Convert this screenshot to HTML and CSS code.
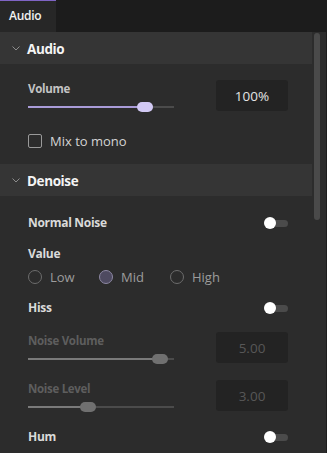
FILE: index.html
```html
<!DOCTYPE html>
<html lang="en">

<head>
    <meta charset="UTF-8">
    <meta name="viewport" content="width=device-width, initial-scale=1.0">
    <title>Audio</title>
    <link rel="stylesheet" href="styles.css">
</head>

<body>
    <div class="tabs">
        <div class="tab">Audio</div>
    </div>

    <div class="main">
        <div class="panel">
            <div class="section-head">
                <svg class="chevron" width="8" height="5" viewBox="0 0 8 5"><polyline points="0.5,0.5 4,4 7.5,0.5" /></svg>
                <span>Audio</span>
            </div>
            <div class="section-body audio-body">
                <div class="slider-row">
                    <div class="slider-col">
                        <div class="label">Volume</div>
                        <div class="slider">
                            <div class="fill" style="width: 79%"></div>
                            <div class="thumb" style="left: 109px"></div>
                        </div>
                    </div>
                    <div class="value-box">100%</div>
                </div>
                <div class="check-row">
                    <span class="checkbox"></span>
                    <span>Mix to mono</span>
                </div>
            </div>

            <div class="section-head">
                <svg class="chevron" width="8" height="5" viewBox="0 0 8 5"><polyline points="0.5,0.5 4,4 7.5,0.5" /></svg>
                <span>Denoise</span>
            </div>
            <div class="section-body denoise-body">
                <div class="toggle-row first">
                    <span class="label strong">Normal Noise</span>
                    <span class="toggle"></span>
                </div>
                <div class="label strong value-label">Value</div>
                <div class="radios">
                    <label class="radio"><span class="dot"></span>Low</label>
                    <label class="radio"><span class="dot checked"></span>Mid</label>
                    <label class="radio"><span class="dot"></span>High</label>
                </div>
                <div class="toggle-row hiss">
                    <span class="label strong">Hiss</span>
                    <span class="toggle"></span>
                </div>
                <div class="slider-row disabled noise-volume">
                    <div class="slider-col">
                        <div class="label">Noise Volume</div>
                        <div class="slider">
                            <div class="fill" style="width: 90%"></div>
                            <div class="thumb" style="left: 124px"></div>
                        </div>
                    </div>
                    <div class="value-box">5.00</div>
                </div>
                <div class="slider-row disabled noise-level">
                    <div class="slider-col">
                        <div class="label">Noise Level</div>
                        <div class="slider">
                            <div class="fill" style="width: 40%"></div>
                            <div class="thumb" style="left: 52px"></div>
                        </div>
                    </div>
                    <div class="value-box">3.00</div>
                </div>
                <div class="toggle-row hum">
                    <span class="label strong">Hum</span>
                    <span class="toggle"></span>
                </div>
            </div>
        </div>
        <div class="scroll">
            <div class="scroll-thumb"></div>
        </div>
    </div>
</body>

</html>
```

FILE: styles.css
```css
body {
    margin: 0;
    width: 327px;
    height: 453px;
    overflow: hidden;
    background-color: #2c2c2c;
    color: #d6d6d6;
    font-family: 'Open Sans', 'Noto Sans', sans-serif;
    font-size: 12px;
}

.tabs {
    height: 32px;
    background-color: #1c1c1c;
    display: flex;
}

.tab {
    width: 56px;
    box-sizing: border-box;
    padding-left: 9px;
    border-top: 1px solid #7f64c4;
    background-color: #272727;
    color: #f2f2f2;
    font-weight: 600;
    font-size: 12px;
    line-height: 30px;
    letter-spacing: -0.3px;
}

.main {
    display: flex;
    height: 421px;
}

.panel {
    width: 312px;
}

.section-head {
    box-sizing: border-box;
    height: 32px;
    padding: 2px 0 0 12px;
    background-color: #353535;
    display: flex;
    align-items: center;
    gap: 7px;
    color: #f4f4f4;
    font-weight: 700;
    font-size: 13.5px;
    letter-spacing: -0.4px;
}

.chevron {
    margin-top: -1px;
}

.chevron polyline {
    fill: none;
    stroke: #8c8c8c;
    stroke-width: 1;
}

.section-body {
    padding: 0 24px 0 28px;
}

.audio-body {
    padding-top: 16px;
    padding-bottom: 15px;
}

.label {
    line-height: 18px;
    font-weight: 700;
    font-size: 11.5px;
    color: #c4c4c4;
    letter-spacing: -0.3px;
}

.label.strong {
    color: #dadada;
    font-size: 12px;
}

.slider-row {
    display: flex;
    justify-content: space-between;
}

.slider-col {
    width: 146px;
}

.slider {
    position: relative;
    height: 2px;
    margin-top: 8px;
    background-color: #4b4b4b;
}

.fill {
    height: 2px;
    background-color: #a99bd8;
}

.thumb {
    position: absolute;
    top: -4px;
    width: 16px;
    height: 10px;
    border-radius: 5px;
    background-color: #d2c9f4;
}

.value-box {
    width: 72px;
    height: 31px;
    border-radius: 3px;
    background-color: #232323;
    color: #e4e4e4;
    font-size: 13.5px;
    line-height: 32px;
    text-align: center;
}

.check-row {
    display: flex;
    align-items: center;
    gap: 8px;
    margin-top: 22px;
    height: 16px;
    font-size: 13px;
    color: #d4d4d4;
}

.checkbox {
    width: 12px;
    height: 12px;
    border: 1px solid #9a9a9a;
    border-radius: 2px;
}

.denoise-body {
    padding-top: 19px;
}

.toggle-row {
    display: flex;
    justify-content: space-between;
    align-items: center;
    height: 16px;
}

.toggle {
    position: relative;
    width: 24px;
    height: 7px;
    border-radius: 4px;
    background-color: #4b4b4b;
}

.toggle::before {
    content: "";
    position: absolute;
    left: 0;
    top: -3px;
    width: 12px;
    height: 12px;
    border-radius: 50%;
    background-color: #ffffff;
}

.value-label {
    margin-top: 14px;
}

.radios {
    display: flex;
    margin-top: 6px;
    height: 16px;
    align-items: center;
}

.radio {
    display: flex;
    align-items: center;
    gap: 8px;
    width: 71px;
    font-size: 13px;
    color: #9c9c9c;
}

.dot {
    width: 12px;
    height: 12px;
    border: 1px solid #6c6c6c;
    border-radius: 50%;
}

.dot.checked {
    background-color: #4e4a60;
    border-color: #8d88a3;
}

.hiss {
    margin-top: 15px;
}

.noise-volume {
    margin-top: 16px;
}

.noise-level {
    margin-top: 17px;
}

.hum {
    margin-top: 18px;
}

.disabled .label {
    color: #5e5e5e;
}

.disabled .fill {
    background-color: #7a7a7a;
}

.disabled .thumb {
    background-color: #707070;
}

.disabled .value-box {
    color: #575757;
}

.scroll {
    width: 14px;
    border-right: 1px solid #1d1d1d;
}

.scroll-thumb {
    width: 6px;
    height: 187px;
    margin: 1px 0 0 2px;
    border-radius: 3px;
    background-color: #4a4a4a;
}
```
